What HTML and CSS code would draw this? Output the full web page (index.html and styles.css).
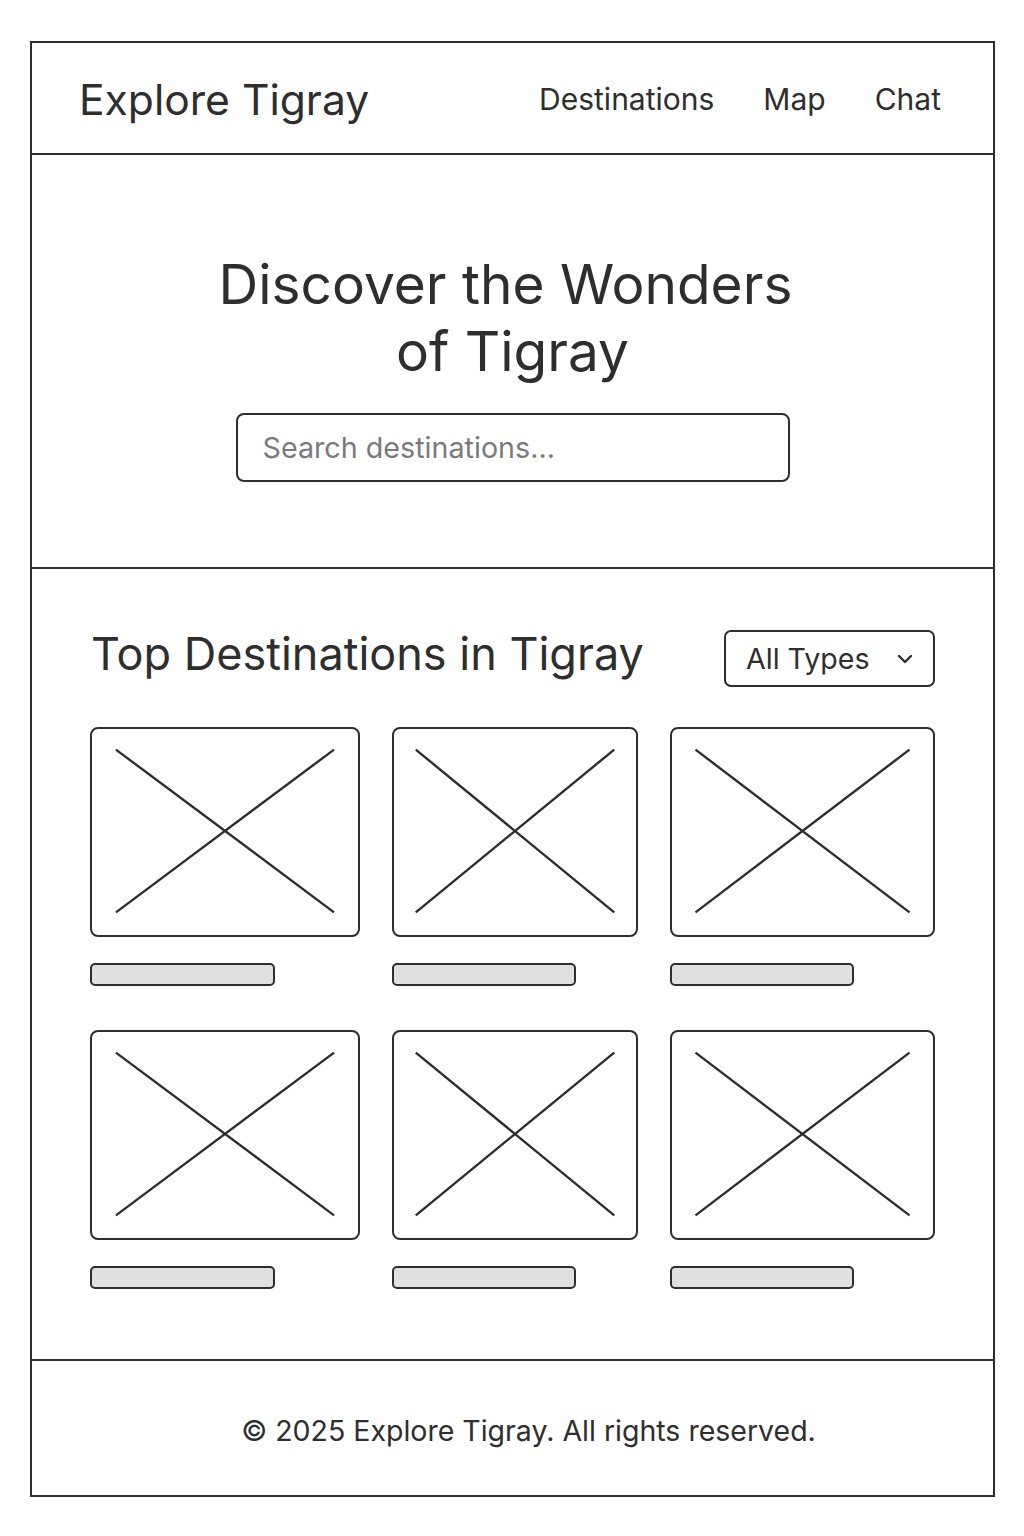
FILE: index.html
```html
<!DOCTYPE html>
<html lang="en">
<head>
<meta charset="utf-8">
<title>Explore Tigray</title>
<link rel="stylesheet" href="styles.css">
</head>
<body>
<div class="frame">
  <header class="header">
    <div class="brand">Explore Tigray</div>
    <nav class="nav">
      <a href="#">Destinations</a>
      <a href="#">Map</a>
      <a href="#">Chat</a>
    </nav>
  </header>
  <section class="hero">
    <h1 class="hero-title"><span class="line-one">Discover the Wonders</span><span class="line-two">of Tigray</span></h1>
    <div class="search">Search destinations...</div>
  </section>
  <section class="listing">
    <div class="listing-head">
      <h2 class="listing-title">Top Destinations in Tigray</h2>
      <div class="select">
        <span>All Types</span>
        <svg class="chev" width="16" height="10" viewBox="0 0 16 10"><path d="M2 2 L8 8 L14 2" fill="none" stroke="#2e2e2e" stroke-width="2.4" stroke-linecap="round" stroke-linejoin="round"/></svg>
      </div>
    </div>
    <div class="grid">
      <div class="card">
        <div class="thumb"><svg class="x"><line x1="9%" y1="10%" x2="91%" y2="89%"/><line x1="9%" y1="89%" x2="91%" y2="10%"/></svg></div>
        <div class="bar bar-a"></div>
      </div>
      <div class="card">
        <div class="thumb"><svg class="x"><line x1="9%" y1="10%" x2="91%" y2="89%"/><line x1="9%" y1="89%" x2="91%" y2="10%"/></svg></div>
        <div class="bar bar-b"></div>
      </div>
      <div class="card">
        <div class="thumb"><svg class="x"><line x1="9%" y1="10%" x2="91%" y2="89%"/><line x1="9%" y1="89%" x2="91%" y2="10%"/></svg></div>
        <div class="bar bar-c"></div>
      </div>
      <div class="card">
        <div class="thumb"><svg class="x"><line x1="9%" y1="10%" x2="91%" y2="89%"/><line x1="9%" y1="89%" x2="91%" y2="10%"/></svg></div>
        <div class="bar bar-a"></div>
      </div>
      <div class="card">
        <div class="thumb"><svg class="x"><line x1="9%" y1="10%" x2="91%" y2="89%"/><line x1="9%" y1="89%" x2="91%" y2="10%"/></svg></div>
        <div class="bar bar-b"></div>
      </div>
      <div class="card">
        <div class="thumb"><svg class="x"><line x1="9%" y1="10%" x2="91%" y2="89%"/><line x1="9%" y1="89%" x2="91%" y2="10%"/></svg></div>
        <div class="bar bar-c"></div>
      </div>
    </div>
  </section>
  <footer class="footer">© 2025 Explore Tigray. All rights reserved.</footer>
</div>
</body>
</html>
```
FILE: styles.css
```css
* { box-sizing: border-box; }
html, body { margin: 0; padding: 0; background: #ffffff; }
body {
  font-family: Inter, "Noto Sans", "Liberation Sans", sans-serif;
  color: #2e2e2e;
}
.frame {
  margin: 41px 0 0 30px;
  width: 965px;
  height: 1456px;
  border: 2px solid #2e2e2e;
  display: flex;
  flex-direction: column;
}
.header {
  height: 112px;
  border-bottom: 2px solid #2e2e2e;
  display: flex;
  align-items: center;
  justify-content: space-between;
  padding: 2px 52px 0 47px;
}
.brand { font-size: 42.6px; font-weight: 400; }
.nav { display: flex; gap: 49px; }
.nav a { color: #2e2e2e; text-decoration: none; font-size: 30px; }
.hero {
  height: 414px;
  border-bottom: 2px solid #2e2e2e;
  display: flex;
  flex-direction: column;
  align-items: center;
  padding-top: 96px;
}
.hero-title {
  margin: 0;
  font-size: 55px;
  font-weight: 400;
  line-height: 67px;
  text-align: center;
  display: flex;
  flex-direction: column;
  align-items: center;
}
.line-one { margin-right: 14px; }
.line-two { margin-left: 0; }
.search {
  margin-top: 28px;
  width: 554px;
  height: 69px;
  border: 2px solid #2e2e2e;
  border-radius: 8px;
  display: flex;
  align-items: center;
  padding-left: 25px;
  font-size: 28.7px;
  color: #7a7a7a;
}
.listing {
  height: 792px;
  border-bottom: 2px solid #2e2e2e;
  padding: 61px 58px 0 58px;
}
.listing-head {
  display: flex;
  align-items: center;
  justify-content: space-between;
  height: 57px;
  margin-bottom: 40px;
}
.listing-title {
  margin: 0 0 10px 1px;
  font-size: 45px;
  font-weight: 400;
}
.select {
  width: 211px;
  height: 57px;
  border: 2px solid #2e2e2e;
  border-radius: 7px;
  display: flex;
  align-items: center;
  justify-content: space-between;
  padding: 0 20px 0 20px;
  font-size: 28.6px;
}
.chev { display: block; }
.grid {
  display: grid;
  grid-template-columns: 270px 246px 265px;
  column-gap: 32px;
  row-gap: 44px;
}
.thumb {
  height: 210px;
  border: 2px solid #2e2e2e;
  border-radius: 8px;
  position: relative;
}
.x {
  position: absolute;
  inset: 0;
  width: 100%;
  height: 100%;
}
.x line { stroke: #2e2e2e; stroke-width: 2.4; }
.bar {
  margin-top: 26px;
  height: 23px;
  background: #e0e0e0;
  border: 2px solid #2e2e2e;
  border-radius: 5px;
}
.bar-a { width: 185px; }
.bar-b { width: 184px; }
.bar-c { width: 184px; }
.footer {
  flex: 1;
  display: flex;
  align-items: center;
  justify-content: center;
  font-size: 28.5px;
  padding: 4px 0 0 32px;
}
```
